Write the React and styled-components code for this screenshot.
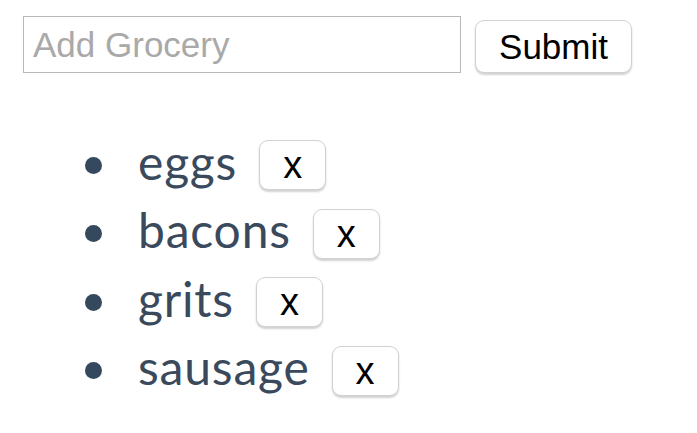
import React, { useState } from "react";
import styled, { createGlobalStyle } from "styled-components";

const GlobalStyle = createGlobalStyle`
  body {
    margin: 0;
    background: #ffffff;
  }
`;

export default function App() {
  const [items, setItems] = useState(["eggs", "bacons", "grits", "sausage"]);
  const [value, setValue] = useState("");

  const submitHandler = (e) => {
    e.preventDefault();
    if (!value.trim()) return;
    setItems([...items, value.trim()]);
    setValue("");
  };

  const removeHandler = (index) => {
    setItems(items.filter((_, i) => i !== index));
  };

  return (
    <Page>
      <GlobalStyle />
      <Form onSubmit={submitHandler}>
        <GroceryInput
          placeholder="Add Grocery"
          value={value}
          onChange={(e) => setValue(e.target.value)}
        />
        <SubmitButton type="submit">Submit</SubmitButton>
      </Form>
      <List>
        {items.map((item, i) => (
          <Item key={item + i}>
            <Bullet />
            <ItemName>{item}</ItemName>
            <RemoveButton onClick={() => removeHandler(i)}>x</RemoveButton>
          </Item>
        ))}
      </List>
    </Page>
  );
}

const Page = styled.div`
  padding: 16px 23px;
`;

const Form = styled.form`
  display: flex;
  align-items: flex-end;
  gap: 14px;
`;

const GroceryInput = styled.input`
  box-sizing: border-box;
  width: 438px;
  height: 57px;
  padding: 0 9px;
  border: 1px solid #b8b8b8;
  border-radius: 0;
  font-family: "Liberation Sans", Arial, sans-serif;
  font-size: 35px;
  color: #222;
  outline: none;

  &::placeholder {
    color: #a9a9a9;
  }
`;

const SubmitButton = styled.button`
  box-sizing: border-box;
  width: 157px;
  height: 53px;
  padding: 0;
  border: 1px solid #d2d2d2;
  border-radius: 9px;
  background: #ffffff;
  box-shadow: 0 2px 2px rgba(0, 0, 0, 0.18);
  font-family: "Liberation Sans", Arial, sans-serif;
  font-size: 35px;
  color: #000;
  cursor: pointer;
`;

const List = styled.ul`
  list-style: none;
  margin: 58px 0 0;
  padding: 0 0 0 62px;
`;

const Item = styled.li`
  display: flex;
  align-items: center;
  height: 68.5px;
`;

const Bullet = styled.span`
  width: 17px;
  height: 17px;
  border-radius: 50%;
  background: #34495e;
  margin-right: 36px;
  flex-shrink: 0;
`;

const ItemName = styled.span`
  font-family: "Lato", sans-serif;
  font-weight: 400;
  font-size: 48px;
  letter-spacing: 0.8px;
  color: #3a4a5c;
  margin-top: -8px;
`;

const RemoveButton = styled.button`
  box-sizing: border-box;
  width: 67px;
  height: 50px;
  margin-left: 22px;
  padding: 0;
  border: 1px solid #d2d2d2;
  border-radius: 9px;
  background: #ffffff;
  box-shadow: 0 2px 2px rgba(0, 0, 0, 0.18);
  font-family: "Liberation Sans", Arial, sans-serif;
  font-size: 38px;
  line-height: 1;
  color: #000;
  cursor: pointer;
`;
